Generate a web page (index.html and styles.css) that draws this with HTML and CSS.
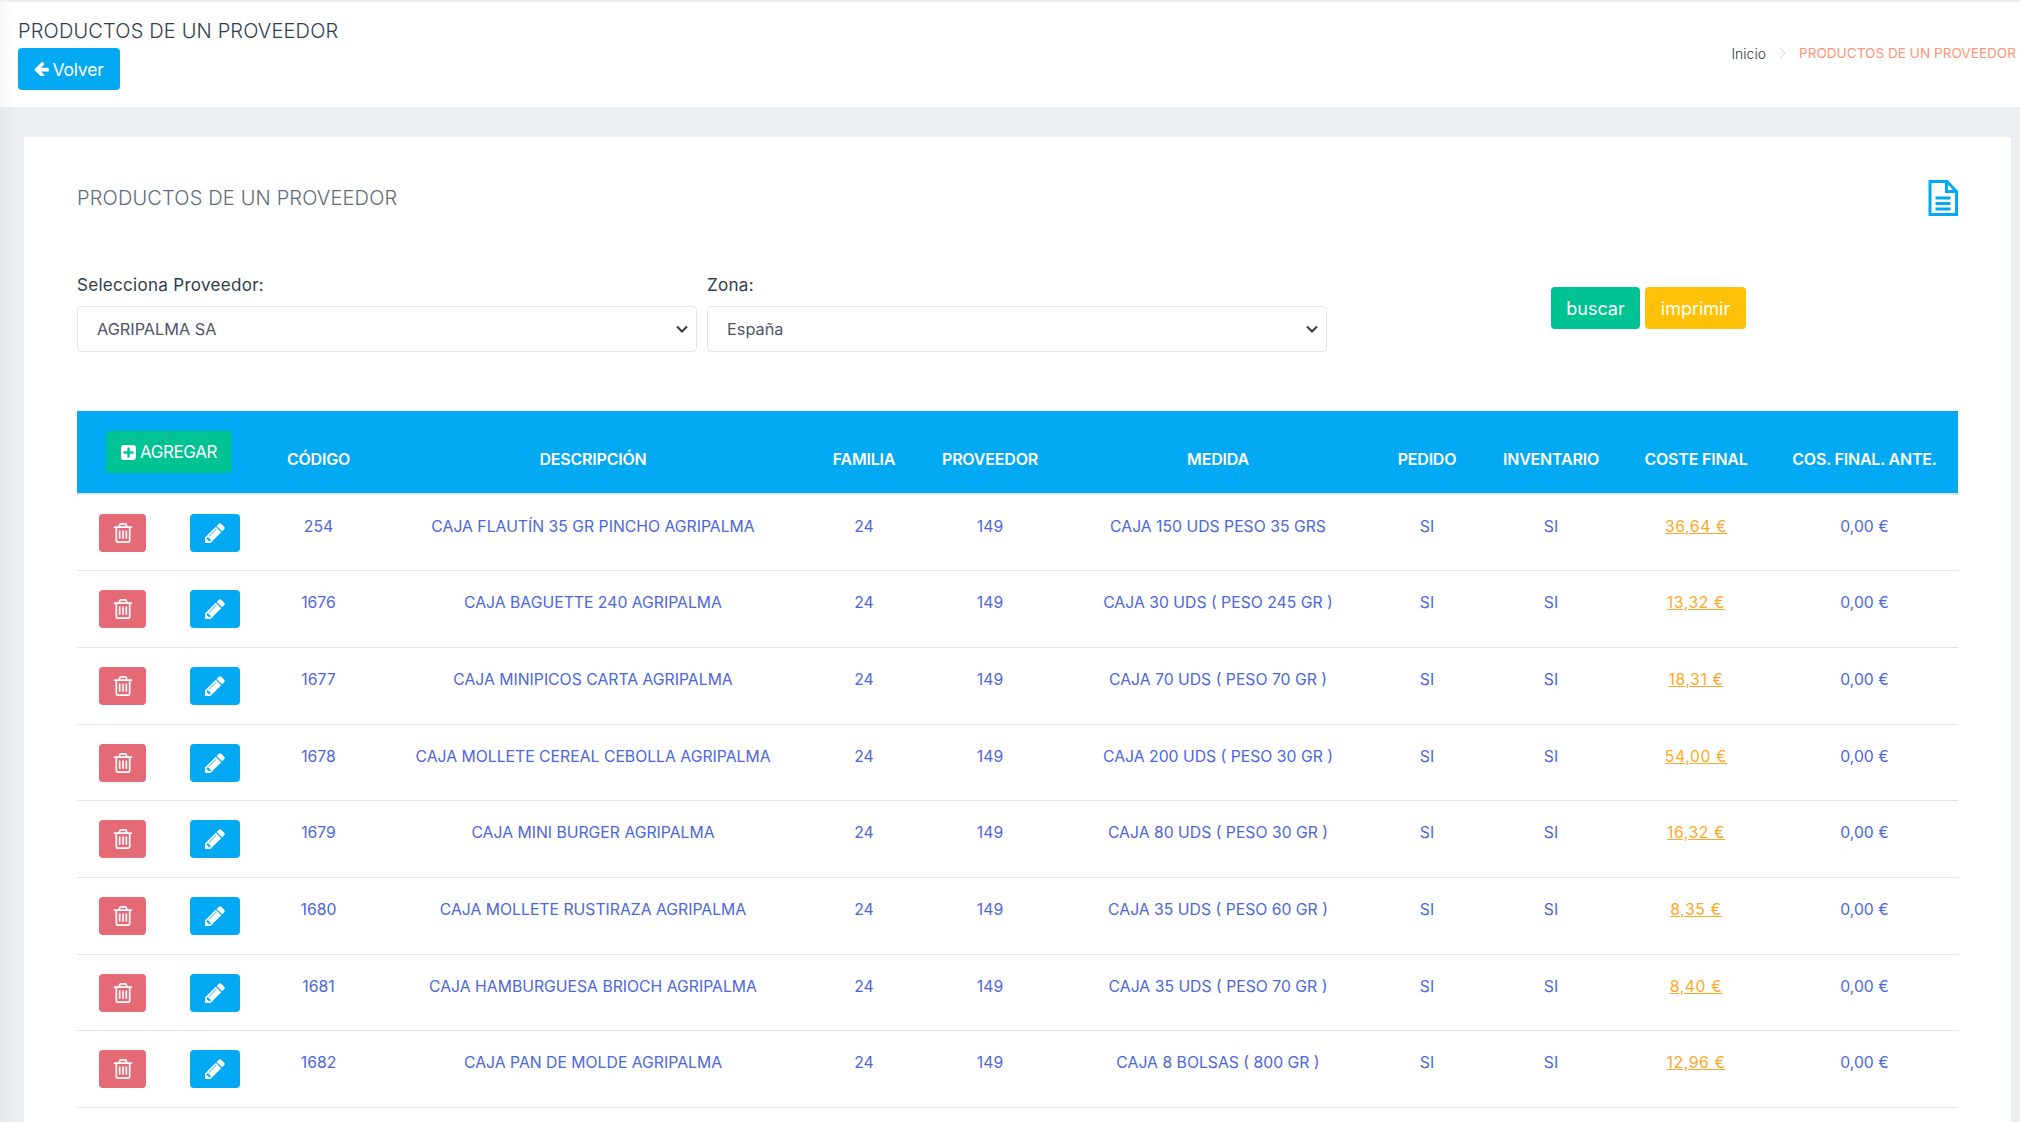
FILE: index.html
```html
<!DOCTYPE html>
<html lang="es">
<head>
    <meta charset="UTF-8">
    <title>Productos de un proveedor</title>
    <link rel="stylesheet" href="styles.css">
</head>
<body>

<!-- Page title bar -->
<div class="page-titles">
    <div class="title-block">
        <h3 class="page-title">PRODUCTOS DE UN PROVEEDOR</h3>
        <a class="btn btn-info btn-back" href="#">
            <svg class="ico-arrow" viewBox="128 192 1536 1408"><path d="M1664 896v128q0 53-32.5 90.5t-84.5 37.5h-704l293 294q38 36 38 90t-38 90l-75 76q-37 37-90 37-52 0-90-37l-651-652q-37-37-37-90 0-52 37-91l651-650q38-38 90-38 51 0 90 38l75 74q38 38 38 91t-38 91l-293 293h704q52 0 84.5 37.5t32.5 90.5z"/></svg>
            Volver
        </a>
    </div>
    <ol class="breadcrumb">
        <li class="home"><a href="#">Inicio</a></li>
        <li class="sep"><svg viewBox="0 0 8 14"><path d="M1 1l6 6-6 6"/></svg></li>
        <li class="active">PRODUCTOS DE UN PROVEEDOR</li>
    </ol>
</div>

<div class="card">
    <div class="card-head">
        <h4 class="card-title">PRODUCTOS DE UN PROVEEDOR</h4>
        <svg class="ico-doc" viewBox="0 0 30 36"><path d="M2 1.5h17l9.500 10v23h-26.500z"/><path d="M18.500 1.500v10h10"/><path d="M7.500 18h15M7.500 23.500h15M7.500 29h15"/></svg>
    </div>

    <form class="filters">
        <div class="field">
            <label>Selecciona Proveedor:</label>
            <select><option>AGRIPALMA SA</option></select>
        </div>
        <div class="field">
            <label>Zona:</label>
            <select><option>España</option></select>
        </div>
        <div class="filter-actions">
            <a class="btn btn-success" href="#">buscar</a>
            <a class="btn btn-warning" href="#">imprimir</a>
        </div>
    </form>

    <table class="products">
        <colgroup>
            <col class="c-actions"><col class="c-code"><col class="c-desc"><col class="c-fam"><col class="c-prov">
            <col class="c-size"><col class="c-order"><col class="c-inv"><col class="c-cost"><col class="c-prev">
        </colgroup>
        <thead>
            <tr>
                <th class="th-add">
                    <a class="btn btn-success btn-add" href="#">
                        <svg class="ico-plus" viewBox="128 128 1536 1536"><path d="M1408 960v-128q0-26-19-45t-45-19h-320v-320q0-26-19-45t-45-19h-128q-26 0-45 19t-19 45v320h-320q-26 0-45 19t-19 45v128q0 26 19 45t45 19h320v320q0 26 19 45t45 19h128q26 0 45-19t19-45v-320h320q26 0 45-19t19-45zm256-544v960q0 119-84.500 203.500t-203.500 84.500h-960q-119 0-203.500-84.500t-84.500-203.500v-960q0-119 84.500-203.500t203.500-84.500h960q119 0 203.500 84.500t84.500 203.500z"/></svg>
                        AGREGAR
                    </a>
                </th>
                <th>CÓDIGO</th>
                <th>DESCRIPCIÓN</th>
                <th>FAMILIA</th>
                <th>PROVEEDOR</th>
                <th>MEDIDA</th>
                <th>PEDIDO</th>
                <th>INVENTARIO</th>
                <th>COSTE FINAL</th>
                <th>COS. FINAL. ANTE.</th>
            </tr>
        </thead>
        <tbody id="rows"></tbody>
    </table>
</div>

<template id="row-actions">
    <div class="row-actions">
        <a class="btn btn-danger" href="#"><svg class="ico-trash" viewBox="128 128 1536 1536"><path d="M704 736v576q0 14-9 23t-23 9h-64q-14 0-23-9t-9-23v-576q0-14 9-23t23-9h64q14 0 23 9t9 23zm256 0v576q0 14-9 23t-23 9h-64q-14 0-23-9t-9-23v-576q0-14 9-23t23-9h64q14 0 23 9t9 23zm256 0v576q0 14-9 23t-23 9h-64q-14 0-23-9t-9-23v-576q0-14 9-23t23-9h64q14 0 23 9t9 23zm128 724v-948h-896v948q0 22 7 40.500t14.500 27 10.500 8.500h832q3 0 10.500-8.500t14.500-27 7-40.500zm-672-1076h448l-48-117q-7-9-17-11h-317q-10 2-17 11zm928 32v64q0 14-9 23t-23 9h-96v948q0 83-47 143.500t-113 60.500h-832q-66 0-113-58.500t-47-141.500v-952h-96q-14 0-23-9t-9-23v-64q0-14 9-23t23-9h309l70-167q15-37 54-63t79-26h320q40 0 79 26t54 63l70 167h309q14 0 23 9t9 23z"/></svg></a>
        <a class="btn btn-info" href="#"><svg class="ico-pencil" viewBox="128 128 1536 1536"><path d="M491 1536l91-91-235-235-91 91v107h128v128h107zm523-928q0-22-22-22-10 0-17 7l-542 542q-7 7-7 17 0 22 22 22 10 0 17-7l542-542q7-7 7-17zm-54-192l416 416-832 832h-416v-416zm683 96q0 53-37 90l-166 166-416-416 166-165q36-38 90-38 53 0 91 38l235 234q37 39 37 89z"/></svg></a>
    </div>
</template>

<script>
    // Table rows
    var products = [
        ["254", "CAJA FLAUTÍN 35 GR PINCHO AGRIPALMA", "CAJA 150 UDS PESO 35 GRS", "36,64 €"],
        ["1676", "CAJA BAGUETTE 240 AGRIPALMA", "CAJA 30 UDS ( PESO 245 GR )", "13,32 €"],
        ["1677", "CAJA MINIPICOS CARTA AGRIPALMA", "CAJA 70 UDS ( PESO 70 GR )", "18,31 €"],
        ["1678", "CAJA MOLLETE CEREAL CEBOLLA AGRIPALMA", "CAJA 200 UDS ( PESO 30 GR )", "54,00 €"],
        ["1679", "CAJA MINI BURGER AGRIPALMA", "CAJA 80 UDS ( PESO 30 GR )", "16,32 €"],
        ["1680", "CAJA MOLLETE RUSTIRAZA AGRIPALMA", "CAJA 35 UDS ( PESO 60 GR )", "8,35 €"],
        ["1681", "CAJA HAMBURGUESA BRIOCH AGRIPALMA", "CAJA 35 UDS ( PESO 70 GR )", "8,40 €"],
        ["1682", "CAJA PAN DE MOLDE AGRIPALMA", "CAJA 8 BOLSAS ( 800 GR )", "12,96 €"]
    ];

    var tbody = document.getElementById("rows");
    var actions = document.getElementById("row-actions");

    products.forEach(function(p) {
        var tr = document.createElement("tr");
        var first = document.createElement("td");
        first.appendChild(actions.content.cloneNode(true));
        tr.appendChild(first);

        [p[0], p[1], "24", "149", p[2], "SI", "SI", null, "0,00 €"].forEach(function(text) {
            var td = document.createElement("td");
            if (text === null) {
                var a = document.createElement("a");
                a.href = "#";
                a.className = "cost-link";
                a.textContent = p[3];
                td.appendChild(a);
            } else {
                td.textContent = text;
            }
            tr.appendChild(td);
        });
        tbody.appendChild(tr);
    });
</script>

</body>
</html>
```

FILE: styles.css
```css
/* General */
* {
    box-sizing: border-box;
}

body {
    margin: 0;
    background: linear-gradient(to right, rgba(0, 0, 0, 0.025), transparent 16px), #ebeff4;
    color: #2f3d4a;
    font-family: 'Inter', 'Liberation Sans', sans-serif;
    font-size: 16px;
}

a {
    text-decoration: none;
    color: inherit;
}

svg {
    fill: currentColor;
}

/* Buttons */
.btn {
    display: inline-flex;
    align-items: center;
    justify-content: center;
    height: 42px;
    border-radius: 4px;
    color: #fff;
    font-size: 17px;
    letter-spacing: -0.2px;
}

.btn-info {
    background: #03a9f3;
}

.btn-success {
    background: #00c292;
}

.btn-warning {
    background: #fec107;
}

.btn-danger {
    background: #e46a76;
}

/* Title bar */
.page-titles {
    display: flex;
    justify-content: space-between;
    align-items: center;
    height: 107px;
    padding: 2px 4px 0 18px;
    border-top: 2px solid #ebeff4;
    background: linear-gradient(to right, rgba(0, 0, 0, 0.03), transparent 14px), #fff;
}

.title-block {
    margin-bottom: 5px;
}

.page-title {
    margin: 0 0 2px;
    font-size: 20px;
    font-weight: 300;
    line-height: 30px;
    letter-spacing: 0.16px;
    color: #2f3d4a;
}

.btn-back {
    width: 102px;
    gap: 3px;
    font-size: 17.500px;
}

.ico-arrow {
    width: 15px;
    height: 14px;
}

.breadcrumb {
    display: flex;
    align-items: center;
    margin: 0 0 5px;
    padding: 0;
    list-style: none;
    font-size: 13.600px;
    font-weight: 300;
}

.breadcrumb .home {
    font-size: 14px;
}

.breadcrumb .sep {
    display: flex;
    margin: 0 13px;
}

.breadcrumb .sep svg {
    width: 7px;
    height: 12px;
    fill: none;
    stroke: #c6ccd4;
}

.breadcrumb .active {
    color: #fb9678;
    font-weight: 400;
}

/* Card */
.card {
    margin: 30px 9px 0 24px;
    padding: 42px 53px 15px;
    background: #fff;
}

.card-head {
    display: flex;
    justify-content: space-between;
    align-items: center;
    height: 38px;
}

.card-title {
    margin: 0;
    font-size: 20px;
    font-weight: 300;
    letter-spacing: 0.16px;
    color: #5f6b76;
}

.ico-doc {
    width: 30px;
    height: 36px;
    fill: none;
    stroke: #03a9f3;
    stroke-width: 3;
}

/* Filters */
.filters {
    display: flex;
    margin-top: 56px;
}

.field {
    width: 620px;
    margin-right: 10px;
}

.field label {
    display: block;
    height: 24px;
    margin-bottom: 9px;
    line-height: 24px;
    font-size: 17px;
    letter-spacing: 0.3px;
}

.field select {
    display: block;
    width: 100%;
    height: 46px;
    padding: 0 30px 0 19px;
    border: 1px solid #e2e5e9;
    border-radius: 4px;
    background: #fff url("data:image/svg+xml,%3Csvg xmlns='http://www.w3.org/2000/svg' viewBox='0 0 12 8'%3E%3Cpath d='M1 1.500l5 5 5-5' fill='none' stroke='%23343a40' stroke-width='2'/%3E%3C/svg%3E") no-repeat right 8px center / 12px 8px;
    color: #4f5467;
    font-family: inherit;
    font-size: 16.300px;
    appearance: none;
}

.filter-actions {
    display: flex;
    gap: 5px;
    margin: 14px 0 0 214px;
}

.filter-actions .btn {
    font-size: 18px;
    letter-spacing: 0;
}

.filter-actions .btn-success {
    width: 89px;
}

.filter-actions .btn-warning {
    width: 101px;
}

/* Products table */
.products {
    width: 1881px;
    margin-top: 59px;
    border-collapse: collapse;
    table-layout: fixed;
    text-align: center;
    font-size: 15.750px;
    color: #4c66dd;
}

.c-actions { width: 185px; }
.c-code { width: 113px; }
.c-desc { width: 436px; }
.c-fam { width: 106px; }
.c-prov { width: 146px; }
.c-size { width: 310px; }
.c-order { width: 108px; }
.c-inv { width: 140px; }
.c-cost { width: 150px; }
.c-prev { width: 187px; }

.products th {
    height: 83px;
    padding: 36px 0 0;
    border-bottom: 2px solid #e4e6e9;
    background: #03a9f3;
    color: #fff;
    font-size: 16px;
    font-weight: 600;
    letter-spacing: -0.2px;
    vertical-align: top;
    line-height: 24px;
    white-space: nowrap;
}

.products .th-add {
    padding: 20px 0 0 29px;
    text-align: left;
}

.btn-add {
    display: flex;
    width: 126px;
    gap: 4px;
    font-weight: 400;
    letter-spacing: -0.4px;
}

.ico-plus {
    width: 15px;
    height: 15px;
}

.products td {
    height: 76.700px;
    padding: 20px 0 0;
    border-bottom: 1px solid #e2e4e7;
    vertical-align: top;
    line-height: 24px;
    white-space: nowrap;
}

.row-actions {
    display: flex;
    gap: 44px;
    margin-top: -1px;
    padding: 0 0 0 22px;
}

.row-actions .btn {
    height: 38px;
}

.row-actions .btn-danger {
    width: 47px;
}

.row-actions .btn-info {
    width: 50px;
}

.ico-trash {
    width: 20px;
    height: 20px;
}

.ico-pencil {
    width: 20px;
    height: 20px;
}

.cost-link {
    color: #ffa726;
    text-decoration: underline;
    letter-spacing: 0.6px;
}
```
